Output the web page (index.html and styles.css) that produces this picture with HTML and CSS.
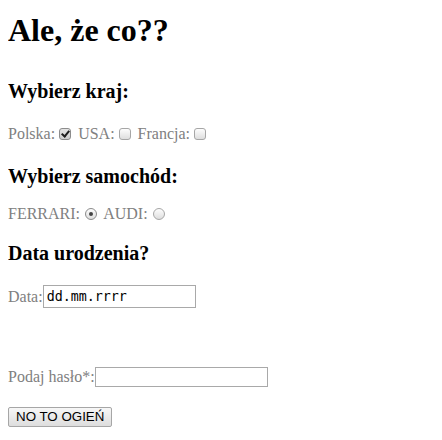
FILE: index.html
```html
<!DOCTYPE html>
<html lang="pl">
<head>
<meta charset="utf-8">
<link rel="stylesheet" href="styles.css">
</head>
<body>
<h1 class="title">Ale, że co??</h1>
<form class="form">
  <h2 class="section first">Wybierz kraj:</h2>
  <p class="row row-check">Polska:<input type="checkbox" class="check" checked> USA:<input type="checkbox" class="check"> Francja:<input type="checkbox" class="check"></p>
  <h2 class="section after-check">Wybierz samochód:</h2>
  <p class="row row-radio">FERRARI:<input type="radio" name="car" class="radio" checked> AUDI:<input type="radio" name="car" class="radio"></p>
  <h2 class="section after-radio">Data urodzenia?</h2>
  <div class="field date-row"><span class="label">Data:</span><span class="date">dd.mm.rrrr</span></div>
  <div class="field pass-row"><span class="label">Podaj hasło*:</span><input type="password" class="pass"></div>
  <div class="btn-row"><button type="button" class="btn">NO TO OGIEŃ</button></div>
</form>
</body>
</html>
```
FILE: styles.css
```css
html, body {
  background: #fff;
}
body {
  margin: 0 8px;
  padding-top: 12px;
  font-family: "Liberation Serif", "Times New Roman", serif;
  font-size: 16px;
  color: #000;
}
.title {
  font-size: 32px;
  font-weight: bold;
  margin: 0;
}
.form {
  margin: 0;
}
.section {
  font-size: 20px;
  font-weight: bold;
  margin: 0;
}
.first {
  margin-top: 31px;
}
.after-check {
  margin-top: 22px;
}
.after-radio {
  margin-top: 19px;
}
.row {
  color: #808080;
  margin: 0;
}
.row-check {
  margin-top: 22px;
}
.row-radio {
  margin-top: 17px;
}
.check, .radio {
  -webkit-appearance: none;
  appearance: none;
  width: 12px;
  height: 12px;
  margin: 0 3px 0 4px;
  border: 1px solid #a6a6a6;
  background: linear-gradient(#fdfdfd, #dedede);
  vertical-align: -1px;
  position: relative;
  box-sizing: border-box;
}
.check {
  border-radius: 3px;
}
.check:checked {
  background: linear-gradient(#e4e4e4, #cdcdcd);
  border-color: #8c8c8c;
}
.check:checked::after {
  content: "";
  position: absolute;
  left: 3px;
  top: 0px;
  width: 3px;
  height: 6px;
  border: solid #1e1e1e;
  border-width: 0 2px 2px 0;
  transform: rotate(40deg);
}
.radio {
  border-radius: 50%;
  margin: 0 3px 0 5px;
}
.radio:checked {
  border-color: #8c8c8c;
}
.radio:checked::after {
  content: "";
  position: absolute;
  left: 3px;
  top: 3px;
  width: 4px;
  height: 4px;
  border-radius: 50%;
  background: #444;
}
.field {
  display: flex;
  align-items: center;
  color: #808080;
}
.date-row {
  margin-top: 20px;
  height: 23px;
}
.date {
  display: block;
  box-sizing: border-box;
  width: 153px;
  height: 23px;
  border: 1px solid #a9a9a9;
  padding: 2px 3px;
  font-family: "DejaVu Sans Mono", monospace;
  font-size: 13.33px;
  line-height: 17px;
  color: #000;
}
.pass-row {
  margin-top: 59px;
  height: 20px;
}
.pass {
  box-sizing: border-box;
  width: 173px;
  height: 20px;
  border: 1px solid #a9a9a9;
  padding: 1px 2px;
  margin: 0;
  background: #fff;
}
.btn-row {
  margin-top: 20px;
  display: flex;
}
.btn {
  font-family: "Liberation Sans", Arial, sans-serif;
  font-size: 13.33px;
  color: #000;
  height: 20px;
  padding: 0 7px;
  border: 1px solid #a6a6a6;
  border-radius: 2px;
  background: linear-gradient(#f7f7f7, #dddddd);
  margin: 0;
  line-height: 18px;
}
```
